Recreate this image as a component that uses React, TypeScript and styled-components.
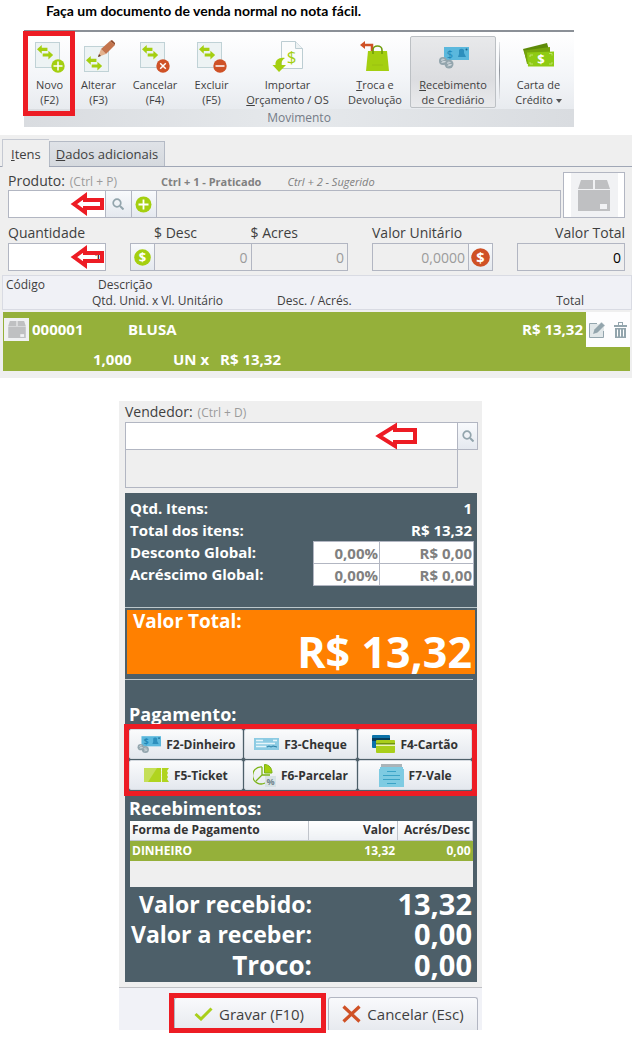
import React from "react";
import styled, { createGlobalStyle, css } from "styled-components";

const color = {
  text: "#3f3f3f",
  muted: "#9b9b9b",
  panel: "#efefef",
  border: "#b2b6c2",
  slate: "#4d5f69",
  green: "#95b03a",
  lime: "#a4cf10",
  rust: "#cf5126",
  steel: "#93a5ad",
  red: "#ed1c24",
  orange: "#ff8000",
};

const GlobalStyle = createGlobalStyle`
  *, *::before, *::after { box-sizing: border-box; }
  body {
    margin: 0;
    background: #fff;
    color: ${color.text};
    font-family: "Open Sans", "Noto Sans", sans-serif;
  }
  button, input { font: inherit; color: inherit; margin: 0; border-radius: 0; }
  svg { display: block; flex: none; }
`;

const Title = styled.h1`
  margin: 0;
  padding: 0 46px 8px;
  font: 700 14px/22px Lato, sans-serif;
  color: #000;
`;

const Highlight = styled.span<{ $inset: string }>`
  position: absolute;
  inset: ${(p) => p.$inset};
  border: 5px solid ${color.red};
  pointer-events: none;
`;

/* Ribbon */

const Ribbon = styled.section`
  margin: 0 58px 8px 24px;
  border-top: 2px solid #8b9097;
`;

const Tools = styled.div`
  display: flex;
  height: 77px;
  background: linear-gradient(#ffffff, #f3f5f8 60%, #e8ebef);
`;

const ToolSlot = styled.div<{ $grow: number }>`
  position: relative;
  display: flex;
  flex: ${(p) => p.$grow} 1 0;
`;

const Tool = styled.button<{ $pressed?: boolean }>`
  display: flex;
  flex: 1;
  flex-direction: column;
  align-items: center;
  gap: 3px;
  min-width: 0;
  padding: 7px 0 0;
  border: 1px solid transparent;
  background: none;
  font-size: 11px;
  line-height: 15px;
  white-space: nowrap;
  ${(p) =>
    p.$pressed &&
    css`
      margin: 4px 0 1px;
      padding-top: 3px;
      border: 1px solid #bcc0c4;
      border-radius: 2px;
      background: linear-gradient(#e8e9eb, #dcdde0 60%, #e9eaec);
    `}
`;

const Separator = styled.div`
  width: 1px;
  margin: 10px 3px;
  background: linear-gradient(#e4e6e9, #8f949b, #e4e6e9);
`;

const RibbonCaption = styled.div`
  background: linear-gradient(90deg, #d9dce0, #e6e9ec 50%, #d9dce0);
  color: #747b87;
  font-size: 12px;
  line-height: 18px;
  text-align: center;
`;

/* Shared form parts */

const Label = styled.label<{ $end?: boolean }>`
  font-size: 14px;
  line-height: 20px;
  white-space: nowrap;
  text-align: ${(p) => (p.$end ? "right" : "left")};
`;

const Hint = styled.span`
  margin-left: 5px;
  color: ${color.muted};
  font-size: 12px;
  line-height: 1;
`;

const Box = styled.input<{ $editable?: boolean; $dark?: boolean }>`
  width: 100%;
  min-width: 0;
  height: 28px;
  padding: 0 3px;
  border: 1px solid ${color.border};
  background: ${(p) => (p.$editable ? "#fff" : color.panel)};
  color: ${(p) => (p.$dark ? "#000" : color.muted)};
  font-size: 14px;
  text-align: right;
  outline: none;
`;

const Marked = styled.div`
  position: relative;
  display: flex;
  align-items: center;
`;

const ArrowMark = styled.svg<{ $right: number }>`
  position: absolute;
  right: ${(p) => p.$right}px;
  pointer-events: none;
`;

const IconButton = styled.button`
  display: grid;
  place-items: center;
  flex: 0 0 25px;
  height: 28px;
  padding: 0;
  border: 1px solid ${color.border};
  background: linear-gradient(#f8fafc, #e5e9ef);
`;

/* Items panel */

const ItemsPanel = styled.section`
  padding: 4px 0 7px;
  background: ${color.panel};
`;

const Tabs = styled.div`
  display: flex;
  align-items: flex-end;
  height: 28px;
  padding-left: 2px;
  border-bottom: 1px solid #a0a7b6;
`;

const Tab = styled.button<{ $active?: boolean }>`
  padding: 0 6px;
  border: 1px solid #b4bac5;
  border-bottom: none;
  background: linear-gradient(#dfe2e7, #d5d9de);
  font-size: 13px;
  height: 25px;
  ${(p) =>
    p.$active &&
    css`
      height: 28px;
      margin-bottom: -1px;
      padding: 0 8px;
      border-color: #c5c9d2;
      border-right: none;
      background: ${color.panel};
    `}
`;

const Form = styled.div`
  padding: 5px 7px 4px 8px;
`;

const ProductRow = styled.div`
  display: flex;
  gap: 2px;
`;

const ProductField = styled.div`
  flex: 1;
  min-width: 0;
`;

const ProductLabels = styled.div`
  display: flex;
  height: 18px;
  align-items: center;
`;

const PriceHint = styled.span<{ $suggested?: boolean }>`
  margin-left: ${(p) => (p.$suggested ? 26 : 44)}px;
  color: #808080;
  font-size: 11px;
  font-weight: ${(p) => (p.$suggested ? 400 : 700)};
  font-style: ${(p) => (p.$suggested ? "italic" : "normal")};
  line-height: 20px;
  padding-top: 2px;
  white-space: nowrap;
`;

const ProductInputs = styled.div`
  display: grid;
  grid-template-columns: 98fr 26px 25px 406fr;
  & > * { margin-left: -1px; }
  & > :first-child { margin-left: 0; }
  & > :last-child { width: calc(100% + 1px); }
`;

const Photo = styled.div`
  display: flex;
  justify-content: center;
  width: 62px;
  border: 1px solid ${color.border};
  background: #fff;
`;

const AmountRow = styled.div`
  display: grid;
  grid-template-columns: 98fr 218fr 121fr 108fr;
  gap: 24px;
  padding-top: 5px;
`;

const Amount = styled.div`
  display: flex;
  flex: 1;
  flex-direction: column;
  min-width: 0;
`;

const Joined = styled.div`
  display: flex;
  align-items: flex-end;
  & > * + * { margin-left: -1px; }
`;

const ItemTable = styled.table`
  display: block;
  font-size: 12px;
  thead, tbody { display: block; }
  tr { display: flex; }
  th, td { padding: 0; font-weight: inherit; text-align: left; white-space: nowrap; }
`;

const ItemHead = styled.thead`
  margin: 0 0 2px 2px;
  padding: 1px 47px 2px 3px;
  border: 1px solid #d9dbe3;
  background: #f0f1f6;
  line-height: 16px;
  height: 35px;
`;

const ItemBody = styled.tbody`
  margin: 0 2px 0 3px;
  background: ${color.green};
  color: #fff;
  font-size: 15px;
  font-weight: 700;
`;

const Cell = styled.td<{ $w?: number; $end?: boolean }>`
  ${(p) => (p.$w ? `flex: 0 0 ${p.$w}px;` : "flex: 1;")}
  ${(p) => p.$end && "&& { text-align: right; }"}
`;

const ItemLine = styled.tr<{ $h: number }>`
  height: ${(p) => p.$h}px;
  line-height: ${(p) => p.$h}px;
`;

const CodeCell = styled(Cell)`
  display: flex;
  align-items: center;
  gap: 3px;
  padding-left: 1px !important;
`;

const Thumb = styled.span`
  display: grid;
  place-items: center;
  width: 25px;
  height: 23px;
  background: #f0f1f3;
`;

const Actions = styled(Cell)`
  display: flex;
  align-items: center;
  justify-content: space-between;
  margin-left: 3px;
  padding: 0 3px !important;
  background: #fdfdfe;
`;

const PlainButton = styled.button`
  padding: 0;
  border: none;
  background: none;
`;

/* Checkout panel */

const Checkout = styled.section`
  margin: 23px 150px 12px 119px;
  background: ${color.panel};
`;

const Seller = styled.div`
  display: flex;
  flex-direction: column;
  padding: 1px 4px 5px 6px;
`;

const SellerInput = styled.div`
  display: grid;
  grid-template-columns: 1fr 20px;
  & > button { margin-left: -1px; }
`;

const SellerName = styled.output`
  height: 39px;
  margin: -1px 20px 0 0;
  border: 1px solid ${color.border};
`;

const Summary = styled.div`
  margin: 0 5px 5px 6px;
  padding: 4px 0 1px;
  background: ${color.slate};
  color: #fff;
  font-weight: 700;
`;

const SummaryRow = styled.div`
  display: flex;
  justify-content: space-between;
  height: 22px;
  padding: 0 3px 0 5px;
  font-size: 15px;
  line-height: 22px;
  & > span:last-child { padding-right: 2px; }
`;

const Adjust = styled.div`
  display: grid;
  grid-template-columns: 67px 94px;
  input {
    height: 23px;
    padding: 0 1px;
    color: #808080;
    font-size: 15px;
    font-weight: 700;
  }
  input + input { margin-left: -1px; width: calc(100% + 1px); }
`;

const Rule = styled.hr<{ $short?: boolean }>`
  height: 1px;
  margin: ${(p) => (p.$short ? "5px 4px 22px 0" : "22px 0 2px")};
  border: none;
  background: #bcc7cb;
`;

const GrandTotal = styled.div`
  display: flex;
  flex-direction: column;
  height: 64px;
  margin: 0 2px;
  padding: 0 3px 0 6px;
  background: ${color.orange};
  font-size: 19px;
  line-height: 22px;
`;

const GrandValue = styled.strong`
  align-self: flex-end;
  font-size: 43px;
  font-weight: 700;
  line-height: 40px;
`;

const Heading = styled.h2`
  margin: 0;
  padding-left: 4px;
  font-size: 18px;
  line-height: 24px;
`;

const Payments = styled.div`
  position: relative;
  display: grid;
  grid-template-columns: repeat(3, 1fr);
  grid-auto-rows: 30px;
  gap: 1px;
  margin: 3px 5px 6px 4px;
`;

const PayButton = styled.button`
  display: flex;
  align-items: center;
  justify-content: center;
  gap: 5px;
  padding: 0;
  border: 1px solid #d5dae0;
  border-radius: 2px;
  background: linear-gradient(#fafbfc, #e4e8ee);
  color: #333;
  font-size: 12px;
  font-weight: 700;
  white-space: nowrap;
`;

const ReceiptBox = styled.div`
  height: 66px;
  margin: 1px 4px 2px 5px;
  background: ${color.panel};
`;

const Receipts = styled.table`
  width: 100%;
  border-collapse: collapse;
  table-layout: fixed;
  font-size: 12px;
  th, td { padding: 0 2px; text-align: right; white-space: nowrap; }
  th { height: 19px; line-height: 16px; color: #333; background: linear-gradient(#fff, #edf0f4); border: solid #c0c4cb; border-width: 0 1px 1px 0; }
  td { height: 21px; background: ${color.green}; line-height: 20px; }
  th:first-child, td:first-child { text-align: left; }
`;

const TotalLine = styled.div<{ $large?: boolean }>`
  display: grid;
  grid-template-columns: 187fr 160fr;
  padding-right: 5px;
  font-size: ${(p) => (p.$large ? 26 : 23)}px;
  line-height: ${(p) => (p.$large ? 32 : 30)}px;
  text-align: right;
  white-space: nowrap;
  strong { font-size: 29px; font-weight: 700; }
`;

const Footer = styled.footer`
  display: flex;
  justify-content: flex-end;
  gap: 4px;
  padding: 9px 4px 0;
  border-top: 1px solid #bfc0c4;
  background: #f1f2f7;
`;

const FooterSlot = styled.div`
  position: relative;
  display: flex;
  width: 150px;
`;

const FooterButton = styled.button`
  display: flex;
  flex: 1;
  align-items: center;
  justify-content: center;
  gap: 6px;
  height: 33px;
  padding: 0;
  border: 1px solid ${color.border};
  border-bottom: none;
  border-radius: 3px 3px 0 0;
  background: linear-gradient(#f9fafc, #e7eaef);
  font-size: 15px;
  white-space: nowrap;
`;

/* Icons */

const Swap = () => (
  <g fill={color.lime}>
    <path d="M0 4.500 5 0v3h6v3.200H5v3z" />
    <path d="M17 10.500l-5-4.500v3H6v3.200h6v3z" />
  </g>
);

function DocIcon({ kind }: { kind: "add" | "edit" | "cancel" | "remove" }) {
  const edit = kind === "edit";
  return (
    <svg width="32" height="34" viewBox="0 0 32 34">
      <rect x="1.500" y={edit ? 6.5 : 2.5} width="24" height="25" fill="#edf3f4" stroke="#c0d2d6" />
      <g transform={edit ? "translate(3 16) scale(.95)" : "translate(3 5) scale(.95)"}>
        <Swap />
      </g>
      {edit ? (
        <g>
          <path d="M15 17 18 9l5 5z" fill="#e3b18c" />
          <path d="M15 17l1-3 2 2z" fill="#5a3a28" />
          <path d="M18 9 27 1l5 4-9 9z" fill="#c4744d" />
          <path d="M27 1l2-1 3 3v2z" fill="#8f4a2a" />
        </g>
      ) : (
        <g>
          <circle cx="24" cy="26" r="6.700" fill={kind === "add" ? color.lime : color.rust} />
          <path
            d={kind === "add" ? "M24 21.500v9M19.500 26h9" : kind === "remove" ? "M19.500 26h9" : "M21.200 23.200l5.600 5.600M26.800 23.200l-5.600 5.600"}
            stroke="#fff"
            strokeWidth="1.500"
          />
        </g>
      )}
    </svg>
  );
}

const ImportIcon = () => (
  <svg width="32" height="34" viewBox="0 0 32 34">
    <path d="M9.500 1.500h14l7 7v20h-21z" fill="#fbfcfc" stroke="#bccdd2" />
    <path d="M23.500 1.500v7h7" fill="#edf2f3" stroke="#bccdd2" />
    <text x="19.500" y="23" fill={color.lime} fontSize="17" textAnchor="middle">$</text>
    <path d="M13 18c-6-1-10 2-9.500 7H.5L7 32l7-7H9.500c-.5-3 .5-5 3.500-7z" fill={color.lime} />
  </svg>
);

const BagIcon = () => (
  <svg width="32" height="34" viewBox="0 0 32 34">
    <path d="M13 12V5H5" fill="none" stroke={color.rust} strokeWidth="2.500" />
    <path d="M1 5 6 1v8z" fill={color.rust} />
    <path d="M9 11h19l2 20H7z" fill={color.lime} />
    <path d="M14 14v-4a4.500 4 0 0 1 9 0v4" fill="none" stroke="#6f9c0c" strokeWidth="1.600" />
    <path d="M13 25h11" stroke="#9ac010" />
  </svg>
);

const MoneyIcon = ({ width = 32, height = 34 }: { width?: number; height?: number }) => (
  <svg width={width} height={height} viewBox="0 4 32 26">
    <rect x="7" y="7" width="25" height="13" fill="#5bb8dd" />
    <text x="13" y="18" fontSize="11" textAnchor="middle" fill="#1f86b5">$</text>
    <path d="M22 10a3 3 0 0 1 5 0v3l2 4h-8l1-3z" fill="#2d8fbd" />
    <circle cx="29.500" cy="9.500" r="1" fill="#19658c" />
    <circle cx="6" cy="21" r="4" fill={color.steel} />
    <circle cx="12" cy="24" r="4.500" fill={color.steel} />
    <path d="M7.500 19.500q-3-1-3 .5t3 1.500-3 1M13.500 22.500q-3-1-3 .5t3 1.500-3 1.500" fill="none" stroke="#dfe5e8" strokeWidth=".8" />
  </svg>
);

const CashIcon = () => (
  <svg width="32" height="34" viewBox="0 0 32 34">
    <path d="M0 9 24 3l2 7-22 12z" fill="#5d8a08" />
    <path d="M1 10.500 27 7v14L4 24z" fill="#76a50c" />
    <path d="M4 12.500 31 11.500v15H5z" fill="#8fcb13" />
    <path d="M7 17v-2h3M29 15.500v-2h-3M7 22v2h3M29 22v2h-3" fill="none" stroke="#c6e67b" strokeWidth=".8" />
    <text x="18" y="23.500" fontSize="13" fontWeight="700" textAnchor="middle" fill="#fff">$</text>
  </svg>
);

const SearchIcon = () => (
  <svg width="12" height="12" viewBox="0 0 12 12" fill="none" stroke={color.steel}>
    <circle cx="5" cy="5" r="3.800" strokeWidth="1.700" />
    <path d="M8 8l3.500 3.500" strokeWidth="2" />
  </svg>
);

const PlusIcon = () => (
  <svg width="17" height="17" viewBox="0 0 17 17">
    <circle cx="8.500" cy="8.500" r="8" fill={color.lime} />
    <path d="M8.500 3.500v10M3.500 8.500h10" stroke="#fff" strokeWidth="1.800" />
  </svg>
);

const DollarIcon = ({ fill, size = 17 }: { fill: string; size?: number }) => (
  <svg width={size} height={size} viewBox="0 0 17 17">
    <circle cx="8.500" cy="8.500" r="8.300" fill={fill} />
    <text x="8.500" y="13.300" fontSize="13" fontWeight="700" textAnchor="middle" fill="#fff">$</text>
  </svg>
);

const BoxIcon = ({ width, height }: { width: number; height: number }) => (
  <svg width={width} height={height} viewBox="0 0 32 31" fill="#bfc0c2">
    <path d="M3 0h12v9H0zM17 0h12l3 9H17z" />
    <path d="M0 10h32v21H0z" />
    <path d="M22 24h7v5h-7z" fill="#f1f2f4" />
  </svg>
);

const PhotoMat = styled.div`
  display: grid;
  place-items: center;
  width: 47px;
  background: #f1f2f4;
`;

const EditIcon = () => (
  <svg width="16" height="16" viewBox="0 0 16 16">
    <path d="M1 2h14v13H1z" fill="#e1e7e9" />
    <path d="M8 1.500H.5v14h14V9" fill="none" stroke={color.steel} />
    <path d="M3.500 12.500l1.500-5 7.500-7.500 3.500 3.500L8.500 11z" fill={color.steel} stroke="#fff" strokeWidth=".5" />
  </svg>
);

const TrashIcon = () => (
  <svg width="13" height="16" viewBox="0 0 13 16" fill={color.steel}>
    <path d="M4 0h5v3H8V1H5v2H4zM0 3h13v2H0zM1 6h11v10H1z" />
    <path d="M3.500 7.500v7M6.500 7.500v7M9.500 7.500v7" stroke="#fff" />
  </svg>
);

const ChequeIcon = () => (
  <svg width="25" height="14" viewBox="0 0 25 14">
    <path d="M0 1h25v12H0z" fill="#8ccbe3" />
    <path d="M2 3.500h7M2 6.500h19M2 9.500h10M19 3.500h4" stroke="#e6f5fa" strokeWidth="1.300" />
    <path d="M13 10l2-1 2 1 2-1 4 1" fill="none" stroke="#287da4" />
  </svg>
);

const CardIcon = () => (
  <svg width="23" height="18" viewBox="0 0 23 18">
    <rect width="18" height="13" rx="1" fill="#0c72a9" />
    <path d="M0 3h18v3H0z" fill="#073d5d" />
    <rect x="4" y="5" width="19" height="13" rx="1" fill="#a9cf1b" />
    <path d="M4 8h19v3H4z" fill="#eaf5bd" />
    <path d="M4 8h19v1.500H4z" fill="#6e9410" />
  </svg>
);

const TicketIcon = () => (
  <svg width="25" height="16" viewBox="0 0 25 16">
    <path d="M0 1h17v14H0zM18 1h7l-2 3 1 2-1 2 1 2-1 2 2 3h-7z" fill="#b0d41f" />
    <path d="M0 1h13L4 15H0z" fill="#c5df58" />
    <path d="M17.500 1v14" stroke="#eff6cf" strokeDasharray="2 1" />
  </svg>
);

const InstallmentIcon = () => (
  <svg width="23" height="23" viewBox="0 0 23 23">
    <path d="M9 3a8.500 8.500 0 1 0 3 16M9 3v8l-6 6M9 11h8" fill="none" stroke="#7bb317" strokeWidth="1.300" />
    <path d="M11.500 9V.5c4.500 0 7.500 3.500 7.500 8.500z" fill={color.lime} stroke="#7bb317" />
    <path d="M12 12h11v11H12z" fill="#d7e2e5" />
    <text x="17.500" y="20.500" fontSize="9" textAnchor="middle" fill="#73858d">%</text>
  </svg>
);

const VoucherIcon = () => (
  <svg width="25" height="23" viewBox="0 0 25 23">
    <path d="M2 0h21v3H2z" fill="#aab4b9" />
    <path d="M1 3h23v2h1v18H0V5h1z" fill="#7ecbe2" />
    <path d="M8 7.500h9M4 11.500h17M4 15.500h17M8 19.500h9" stroke="#3ba3c6" />
  </svg>
);

const CheckIcon = () => (
  <svg width="19" height="14" viewBox="0 0 19 14">
    <path d="M1.500 7 7 12 17.500 1.500" fill="none" stroke="#a9cf1b" strokeWidth="3" />
  </svg>
);

const CrossIcon = () => (
  <svg width="19" height="18" viewBox="0 0 19 18">
    <path d="M1.500 1.500l16 15M17.500 1.500l-16 15" stroke={color.rust} strokeWidth="3.200" />
  </svg>
);

const Arrow = ({ right, wide, open }: { right: number; wide?: boolean; open?: boolean }) => (
  <ArrowMark $right={right} width={wide ? 43 : 34} height="28" viewBox={wide ? "0 0 43 28" : "0 0 34 28"} aria-hidden="true">
    <path
      d={wide ? "M4 14 20 4v4h20v12H20v4z" : "M4 14 15 6v4h17v8H15v4z"}
      fill={open ? "none" : "#fff"}
      stroke={color.red}
      strokeWidth="4"
    />
  </ArrowMark>
);

const CaretShape = styled.svg`
  && {
    display: inline-block;
    vertical-align: middle;
  }
`;

const Caret = () => (
  <CaretShape width="6" height="4" viewBox="0 0 6 4">
    <path d="M0 0h6L3 4z" fill="#555" />
  </CaretShape>
);

const tools: { label: React.ReactNode; icon: React.ReactNode; grow: number; pressed?: boolean; marked?: boolean }[] = [
  { label: <>Novo<br />(F2)</>, icon: <DocIcon kind="add" />, grow: 51, marked: true },
  { label: <>Alterar<br />(F3)</>, icon: <DocIcon kind="edit" />, grow: 47 },
  { label: <>Cancelar<br />(F4)</>, icon: <DocIcon kind="cancel" />, grow: 66 },
  { label: <>Excluir<br />(F5)</>, icon: <DocIcon kind="remove" />, grow: 47 },
  { label: <>Importar<br /><u>O</u>rçamento / OS</>, icon: <ImportIcon />, grow: 105 },
  { label: <><u>T</u>roca e<br />Devolução</>, icon: <BagIcon />, grow: 70 },
  { label: <><u>R</u>ecebimento<br />de Crediário</>, icon: <MoneyIcon />, grow: 86, pressed: true },
  { label: <>Carta de<br />Crédito <Caret /></>, icon: <CashIcon />, grow: 71 },
];

const payments = [
  { label: "F2-Dinheiro", icon: <MoneyIcon width={25} height={22} /> },
  { label: "F3-Cheque", icon: <ChequeIcon /> },
  { label: "F4-Cartão", icon: <CardIcon /> },
  { label: "F5-Ticket", icon: <TicketIcon /> },
  { label: "F6-Parcelar", icon: <InstallmentIcon /> },
  { label: "F7-Vale", icon: <VoucherIcon /> },
];

export default function App() {
  return (
    <main>
      <GlobalStyle />
      <Title>Faça um documento de venda normal no nota fácil.</Title>

      <Ribbon>
        <Tools>
          {tools.map((t, i) => (
            <React.Fragment key={i}>
              {i === tools.length - 1 && <Separator />}
              <ToolSlot $grow={t.grow}>
                <Tool type="button" $pressed={t.pressed}>
                  {t.icon}
                  <span>{t.label}</span>
                </Tool>
                {t.marked && <Highlight $inset="-1px 0 -7px -1px" />}
              </ToolSlot>
            </React.Fragment>
          ))}
        </Tools>
        <RibbonCaption>Movimento</RibbonCaption>
      </Ribbon>

      <ItemsPanel>
        <Tabs role="tablist">
          <Tab type="button" role="tab" aria-selected="true" $active><u>I</u>tens</Tab>
          <Tab type="button" role="tab" aria-selected="false"><u>D</u>ados adicionais</Tab>
        </Tabs>
        <Form>
          <ProductRow>
            <ProductField>
              <ProductLabels>
                <Label htmlFor="product">Produto:<Hint>(Ctrl + P)</Hint></Label>
                <PriceHint>Ctrl + 1 - Praticado</PriceHint>
                <PriceHint $suggested>Ctrl + 2 - Sugerido</PriceHint>
              </ProductLabels>
              <ProductInputs>
                <Marked>
                  <Box id="product" $editable />
                  <Arrow right={2} />
                </Marked>
                <IconButton type="button" aria-label="Pesquisar produto"><SearchIcon /></IconButton>
                <IconButton type="button" aria-label="Adicionar produto"><PlusIcon /></IconButton>
                <Box readOnly aria-label="Descrição do produto" />
              </ProductInputs>
            </ProductField>
            <Photo><PhotoMat><BoxIcon width={32} height={31} /></PhotoMat></Photo>
          </ProductRow>

          <AmountRow>
            <Amount>
              <Label htmlFor="quantity">Quantidade</Label>
              <Marked>
                <Box id="quantity" $editable $dark defaultValue="1" />
                <Arrow right={2} open />
              </Marked>
            </Amount>
            <Joined>
              <IconButton type="button" aria-label="Aplicar desconto"><DollarIcon fill={color.lime} /></IconButton>
              <Amount>
                <Label htmlFor="discount">$ Desc</Label>
                <Box id="discount" readOnly value="0" />
              </Amount>
              <Amount>
                <Label htmlFor="surcharge">$ Acres</Label>
                <Box id="surcharge" readOnly value="0" />
              </Amount>
            </Joined>
            <Joined>
              <Amount>
                <Label htmlFor="unit">Valor Unitário</Label>
                <Box id="unit" readOnly value="0,0000" />
              </Amount>
              <IconButton type="button" aria-label="Alterar valor"><DollarIcon fill={color.rust} size={19} /></IconButton>
            </Joined>
            <Amount>
              <Label htmlFor="total" $end>Valor Total</Label>
              <Box id="total" readOnly $dark value="0" />
            </Amount>
          </AmountRow>
        </Form>

        <ItemTable>
          <ItemHead>
            <tr>
              <Cell as="th" $w={92}>Código</Cell>
              <Cell as="th">Descrição</Cell>
            </tr>
            <tr>
              <Cell as="th" $w={86} aria-hidden="true" />
              <Cell as="th" $w={185}>Qtd. Unid. x Vl. Unitário</Cell>
              <Cell as="th">Desc. / Acrés.</Cell>
              <Cell as="th" $end>Total</Cell>
            </tr>
          </ItemHead>
          <ItemBody>
            <ItemLine $h={35}>
              <CodeCell $w={125}><Thumb><BoxIcon width={18} height={17} /></Thumb>000001</CodeCell>
              <Cell>BLUSA</Cell>
              <Cell $end>R$ 13,32</Cell>
              <Actions $w={44}>
                <PlainButton type="button" aria-label="Editar item"><EditIcon /></PlainButton>
                <PlainButton type="button" aria-label="Remover item"><TrashIcon /></PlainButton>
              </Actions>
            </ItemLine>
            <ItemLine $h={24}>
              <Cell $w={90} />
              <Cell $w={80}>1,000</Cell>
              <Cell $w={47}>UN x</Cell>
              <Cell>R$ 13,32</Cell>
            </ItemLine>
          </ItemBody>
        </ItemTable>
      </ItemsPanel>

      <Checkout>
        <Seller>
          <Label htmlFor="seller">Vendedor:<Hint>(Ctrl + D)</Hint></Label>
          <SellerInput>
            <Marked>
              <Box id="seller" $editable />
              <Arrow right={40} wide />
            </Marked>
            <IconButton type="button" aria-label="Pesquisar vendedor"><SearchIcon /></IconButton>
          </SellerInput>
          <SellerName />
        </Seller>

        <Summary>
          <SummaryRow><span>Qtd. Itens:</span><span>1</span></SummaryRow>
          <SummaryRow><span>Total dos itens:</span><span>R$ 13,32</span></SummaryRow>
          <SummaryRow>
            <span>Desconto Global:</span>
            <Adjust>
              <Box $editable defaultValue="0,00%" aria-label="Desconto global em porcentagem" />
              <Box $editable defaultValue="R$ 0,00" aria-label="Desconto global em reais" />
            </Adjust>
          </SummaryRow>
          <SummaryRow>
            <span>Acréscimo Global:</span>
            <Adjust>
              <Box $editable defaultValue="0,00%" aria-label="Acréscimo global em porcentagem" />
              <Box $editable defaultValue="R$ 0,00" aria-label="Acréscimo global em reais" />
            </Adjust>
          </SummaryRow>
          <Rule />
          <GrandTotal>Valor Total:<GrandValue>R$ 13,32</GrandValue></GrandTotal>
          <Rule $short />

          <Heading>Pagamento:</Heading>
          <Payments>
            {payments.map((p) => (
              <PayButton key={p.label} type="button">{p.icon}{p.label}</PayButton>
            ))}
            <Highlight $inset="-5px -5px -6px -5px" />
          </Payments>

          <Heading>Recebimentos:</Heading>
          <ReceiptBox>
            <Receipts>
              <colgroup>
                <col width="52%" />
                <col width="26%" />
                <col width="22%" />
              </colgroup>
              <thead>
                <tr><th>Forma de Pagamento</th><th>Valor</th><th>Acrés/Desc</th></tr>
              </thead>
              <tbody>
                <tr><td>DINHEIRO</td><td>13,32</td><td>0,00</td></tr>
              </tbody>
            </Receipts>
          </ReceiptBox>

          <TotalLine><span>Valor recebido:</span><strong>13,32</strong></TotalLine>
          <TotalLine><span>Valor a receber:</span><strong>0,00</strong></TotalLine>
          <TotalLine $large><span>Troco:</span><strong>0,00</strong></TotalLine>
        </Summary>

        <Footer>
          <FooterSlot>
            <FooterButton type="button"><CheckIcon />Gravar (F10)</FooterButton>
            <Highlight $inset="-4px -2px -3px -5px" />
          </FooterSlot>
          <FooterSlot>
            <FooterButton type="button"><CrossIcon />Cancelar (Esc)</FooterButton>
          </FooterSlot>
        </Footer>
      </Checkout>
    </main>
  );
}
